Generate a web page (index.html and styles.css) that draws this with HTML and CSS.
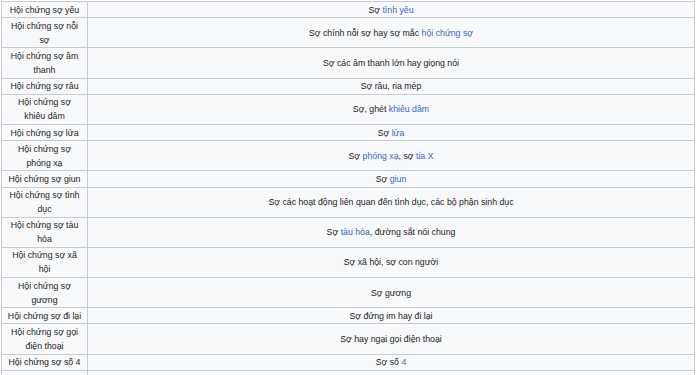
FILE: index.html
```html
<!DOCTYPE html>
<html lang="vi">
<head>
    <meta charset="UTF-8">
    <meta name="viewport" content="width=device-width, initial-scale=1.0">
    <title>Danh sách hội chứng sợ</title>
    <link rel="stylesheet" href="styles.css">
</head>
<body>
    <table class="wikitable">
        <colgroup>
            <col class="col-name">
            <col class="col-desc">
        </colgroup>
        <tbody>
            <tr><td>Hội chứng sợ yêu</td><td>Sợ <a href="#">tình yêu</a></td></tr>
            <tr><td>Hội chứng sợ nỗi sợ</td><td>Sợ chính nỗi sợ hay sợ mắc <a href="#">hội chứng sợ</a></td></tr>
            <tr><td>Hội chứng sợ âm thanh</td><td>Sợ các âm thanh lớn hay giọng nói</td></tr>
            <tr><td>Hội chứng sợ râu</td><td>Sợ râu, ria mép</td></tr>
            <tr><td>Hội chứng sợ khiêu dâm</td><td>Sợ, ghét <a href="#">khiêu dâm</a></td></tr>
            <tr><td>Hội chứng sợ lửa</td><td>Sợ <a href="#">lửa</a></td></tr>
            <tr><td>Hội chứng sợ phóng xạ</td><td>Sợ <a href="#">phóng xạ</a>, sợ <a href="#">tia X</a></td></tr>
            <tr><td>Hội chứng sợ giun</td><td>Sợ <a href="#">giun</a></td></tr>
            <tr><td>Hội chứng sợ tình dục</td><td>Sợ các hoạt động liên quan đến tình dục, các bộ phận sinh dục</td></tr>
            <tr><td>Hội chứng sợ tàu hỏa</td><td>Sợ <a href="#">tàu hỏa</a>, đường sắt nói chung</td></tr>
            <tr><td>Hội chứng sợ xã hội</td><td>Sợ xã hội, sợ con người</td></tr>
            <tr><td>Hội chứng sợ gương</td><td>Sợ gương</td></tr>
            <tr><td>Hội chứng sợ đi lại</td><td>Sợ đứng im hay đi lại</td></tr>
            <tr><td>Hội chứng sợ gọi điện thoại</td><td>Sợ hay ngại gọi điện thoại</td></tr>
            <tr><td>Hội chứng sợ số 4</td><td>Sợ số <a href="#">4</a></td></tr>
            <tr><td>&nbsp;</td><td>&nbsp;</td></tr>
        </tbody>
    </table>
</body>
</html>
```

FILE: styles.css
```css
body {
    margin: 0;
    background: #fff;
    color: #222;
    font-family: 'Liberation Sans', Arial, sans-serif;
    font-size: 8.75px;
    overflow: hidden;
}

.wikitable {
    margin: 1px 0 0 1px;
    width: 694px;
    table-layout: fixed;
    border-collapse: collapse;
    background: #f8f9fa;
}

.col-name {
    width: 86px;
}

.wikitable td {
    border: 1px solid #c8ccd1;
    padding: 0.6px 5.5px;
    line-height: 14px;
    text-align: center;
}

.wikitable a {
    color: #3366cc;
    text-decoration: none;
}
```
